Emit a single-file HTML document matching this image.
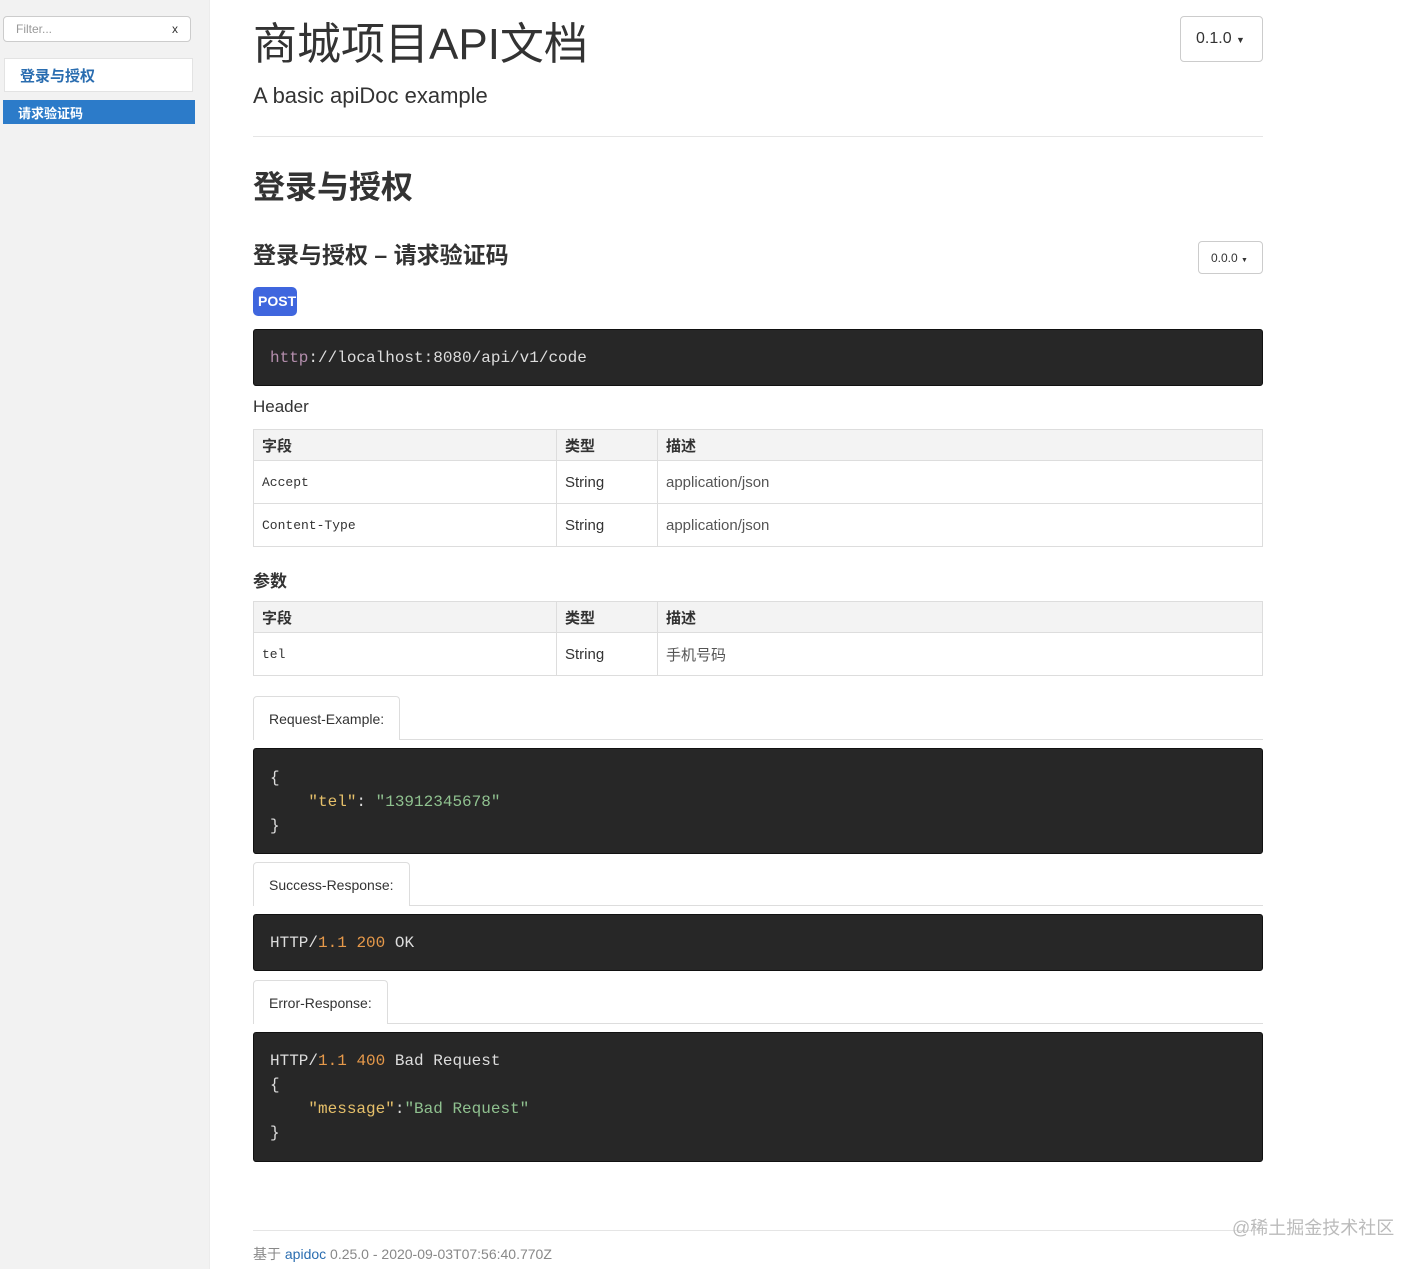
<!DOCTYPE html>
<html><head><meta charset="utf-8"><style>
*{box-sizing:border-box;margin:0;padding:0}
body{width:1426px;height:1269px;position:relative;background:#fff;font-family:"Liberation Sans","Noto Sans CJK SC",sans-serif;color:#333;overflow:hidden}
.a{position:absolute}
.side{left:0;top:0;width:210px;height:1269px;background:#f2f2f2;border-right:1px solid #ececec}
.filter{left:3px;top:16px;width:188px;height:26px;border:1px solid #ccc;border-radius:4px;background:#fff;font-size:12px;color:#999;padding:5px 12px}
.cw{background:#272727;border-radius:3px;left:253px;width:1010px;font-family:"Liberation Mono","Noto Sans CJK SC",monospace;font-size:16px;color:#ddd;padding:0 16px;line-height:24px;border:1px solid #111}
table{position:absolute;left:253px;width:1010px;border-collapse:collapse;font-size:15px}
td,th{border:1px solid #ddd;padding:0 8px;text-align:left}
th{background:#f3f3f3;height:31px;font-weight:bold}
td.m{font-family:"Liberation Mono",monospace;font-size:13px}
td{height:43px;color:#333}
td.g{color:#555}
.tab{left:253px;border:1px solid #ddd;border-bottom:none;border-radius:4px 4px 0 0;background:#fff;font-size:14px;padding:0 15px;height:44px;line-height:44px}
.tl{left:253px;width:1010px;height:1px;background:#ddd}
.k{color:#e6c06a}.s{color:#8fc18f}.n{color:#e6994a}
</style></head><body>
<div class="a side"></div>
<div class="a filter">Filter...<span style="position:absolute;right:12px;color:#333">x</span></div>
<div class="a" style="left:4px;top:58px;width:189px;height:34px;background:#fff;border:1px solid #e3e3e3;color:#2a6db0;font-weight:bold;font-size:15px;padding:6px 15px">登录与授权</div>
<div class="a" style="left:3px;top:100px;width:192px;height:24px;background:#2c7bc9;color:#fff;font-weight:bold;font-size:13px;padding:3px 15px">请求验证码</div>

<div class="a" style="left:253px;top:8px;font-size:44px;color:#333">商城项目API文档</div>
<div class="a" style="left:253px;top:83px;font-size:22px">A basic apiDoc example</div>
<div class="a" style="left:1180px;top:16px;width:83px;height:46px;border:1px solid #ccc;border-radius:4px;font-size:16px;padding:13px 15px">0.1.0 <span style="font-size:9px">▼</span></div>
<div class="a" style="left:253px;top:136px;width:1010px;height:1px;background:#e5e5e5"></div>
<div class="a" style="left:253px;top:162px;font-size:32px;font-weight:bold">登录与授权</div>
<div class="a" style="left:253px;top:236px;font-size:23px;font-weight:bold">登录与授权 – 请求验证码</div>
<div class="a" style="left:1198px;top:241px;width:65px;height:33px;border:1px solid #ccc;border-radius:4px;font-size:12px;padding:9px 12px">0.0.0 <span style="font-size:7px">▼</span></div>
<div class="a" style="left:253px;top:287px;width:44px;height:29px;background:#3f66de;border-radius:5px;color:#fff;font-size:14px;font-weight:bold;padding:6px 5px">POST</div>
<div class="a cw" style="top:329px;height:57px;padding-top:16px"><span style="color:#b48ead">http</span>://localhost:8080/api/v1/code</div>
<div class="a" style="left:253px;top:397px;font-size:17px">Header</div>
<table style="top:429px"><tr><th style="width:303px">字段</th><th style="width:101px">类型</th><th>描述</th></tr>
<tr><td class="m">Accept</td><td>String</td><td class="g">application/json</td></tr>
<tr><td class="m">Content-Type</td><td>String</td><td class="g">application/json</td></tr></table>
<div class="a" style="left:253px;top:567px;font-size:17px;font-weight:bold">参数</div>
<table style="top:601px"><tr><th style="width:303px">字段</th><th style="width:101px">类型</th><th>描述</th></tr>
<tr><td class="m">tel</td><td>String</td><td class="g">手机号码</td></tr></table>

<div class="a tl" style="top:739px"></div>
<div class="a tab" style="top:696px">Request-Example:</div>
<div class="a cw" style="top:748px;height:106px;padding-top:17px">{<br>&nbsp;&nbsp;&nbsp;&nbsp;<span class="k">"tel"</span>: <span class="s">"13912345678"</span><br>}</div>
<div class="a tl" style="top:905px"></div>
<div class="a tab" style="top:862px">Success-Response:</div>
<div class="a cw" style="top:914px;height:57px;padding-top:16px">HTTP/<span class="n">1.1</span> <span class="n">200</span> OK</div>
<div class="a tl" style="top:1023px"></div>
<div class="a tab" style="top:980px">Error-Response:</div>
<div class="a cw" style="top:1032px;height:130px;padding-top:16px">HTTP/<span class="n">1.1</span> <span class="n">400</span> Bad Request<br>{<br>&nbsp;&nbsp;&nbsp;&nbsp;<span class="k">"message"</span>:<span class="s">"Bad Request"</span><br>}</div>

<div class="a" style="left:253px;top:1230px;width:1010px;height:1px;background:#e5e5e5"></div>
<div class="a" style="left:253px;top:1244px;font-size:14px;color:#888">基于 <span style="color:#2a6db0">apidoc</span> 0.25.0 - 2020-09-03T07:56:40.770Z</div>
<div class="a" style="left:1232px;top:1214px;font-size:18px;color:#bbb">@稀土掘金技术社区</div>
</body></html>
